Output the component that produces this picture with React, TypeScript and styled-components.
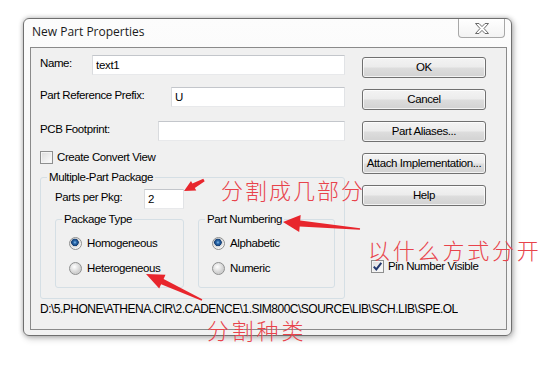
import React from 'react';
import styled, { createGlobalStyle } from 'styled-components';

const uiFont = `'Liberation Sans', Arial, sans-serif`;

const GlobalStyle = createGlobalStyle`
  html, body {
    margin: 0;
    padding: 0;
    background: #ffffff;
  }
  body {
    font-family: ${uiFont};
  }
`;

const Page = styled.div`
  position: relative;
  width: 558px;
  height: 373px;
  padding: 18px 0 0 23px;
  box-sizing: border-box;
  overflow: hidden;
  background: #ffffff;
`;

const Window = styled.div`
  width: 489px;
  height: 318px;
  box-sizing: border-box;
  border: 1px solid #6f6f6f;
  border-radius: 6px;
  background: linear-gradient(#fcfcfc, #f2f2f2);
  box-shadow: 0 0 5px rgba(0, 0, 0, 0.3), 2px 3px 7px rgba(0, 0, 0, 0.18);
  display: flex;
  flex-direction: column;
`;

const TitleBar = styled.div`
  display: flex;
  align-items: flex-start;
  height: 28px;
  padding: 0 6px 0 8px;
  flex-shrink: 0;
`;

const Title = styled.div`
  margin-top: 5px;
  font-family: 'Open Sans', 'Noto Sans', sans-serif;
  font-size: 12px;
  line-height: 16px;
  color: #1a1a1a;
`;

const CloseButton = styled.div`
  margin-left: auto;
  width: 47px;
  height: 19px;
  box-sizing: border-box;
  border: 1px solid #a8a8a8;
  border-top: none;
  border-radius: 0 0 4px 4px;
  background: linear-gradient(#ffffff, #f3f3f3);
  display: flex;
  align-items: center;
  justify-content: center;
`;

const Client = styled.div`
  flex: 1;
  margin: 0 4px 5px 6px;
  border: 1px solid #8a8a8a;
  background: #f0f0f0;
  padding: 7px 20px 0 9px;
  display: flex;
  flex-direction: column;
  font-family: ${uiFont};
  font-size: 11.5px;
  letter-spacing: -0.4px;
  color: #000;
`;

const TopArea = styled.div`
  display: flex;
  gap: 17px;
`;

const LeftCol = styled.div`
  width: 305px;
  display: flex;
  flex-direction: column;
`;

const RightCol = styled.div`
  width: 124px;
  padding-top: 2px;
  display: flex;
  flex-direction: column;
  gap: 11px;
`;

const FieldRow = styled.div<{ $mt?: number; $w?: number }>`
  display: flex;
  justify-content: space-between;
  align-items: flex-start;
  width: ${p => (p.$w ? `${p.$w}px` : '100%')};
  height: 20px;
  margin-top: ${p => p.$mt ?? 0}px;
`;

const Label = styled.span`
  padding-top: 1px;
  line-height: 14px;
  white-space: nowrap;
`;

const TextBox = styled.input<{ $w: number }>`
  width: ${p => p.$w}px;
  height: 20px;
  box-sizing: border-box;
  margin: 0;
  padding: 0 3px;
  border: 1px solid;
  border-color: #c3c6cb #e1e3e6 #e8e9eb #d9dbde;
  background: #ffffff;
  font-family: ${uiFont};
  font-size: 11.5px;
  letter-spacing: -0.3px;
  color: #000;
  outline: none;
`;

const CheckRow = styled.label<{ $mt?: number; $ml?: number }>`
  display: flex;
  align-items: center;
  gap: 4px;
  height: 14px;
  margin-top: ${p => p.$mt ?? 0}px;
  margin-left: ${p => p.$ml ?? 0}px;
  line-height: 14px;
  white-space: nowrap;
`;

const CheckBox = styled.span`
  width: 13px;
  height: 13px;
  box-sizing: border-box;
  border: 1px solid #8e8f8f;
  background: linear-gradient(135deg, #dcdcdc, #fdfdfd);
  box-shadow: inset 0 0 0 1px #f4f4f4;
  display: flex;
  align-items: center;
  justify-content: center;
  flex-shrink: 0;
`;

const RadioDot = styled.span<{ $checked?: boolean }>`
  width: 13px;
  height: 13px;
  box-sizing: border-box;
  border-radius: 50%;
  border: 1px solid #8e8f8f;
  flex-shrink: 0;
  background: ${p =>
    p.$checked
      ? 'radial-gradient(circle at 45% 40%, #8fc0ea 0, #2b6cb0 1.5px, #153e73 3.5px, #d4d4d4 4px, #f6f6f6 6px)'
      : 'radial-gradient(circle at 40% 35%, #ffffff 0, #e8e8e8 3px, #d0d0d0 6px)'};
`;

const GroupBox = styled.fieldset<{ $w: number; $h?: number; $mt?: number }>`
  margin: ${p => p.$mt ?? 0}px 0 0 0;
  padding: 0;
  min-width: 0;
  width: ${p => p.$w}px;
  ${p => (p.$h ? `height: ${p.$h}px;` : '')}
  box-sizing: border-box;
  border: 1px solid #d5dfe5;
  border-radius: 3px;
`;

const Legend = styled.legend`
  margin-left: 6px;
  padding: 0 2px;
  line-height: 14px;
`;

const MultiBody = styled.div`
  padding: 5px 9px 10px 14px;
`;

const InnerGroups = styled.div`
  display: flex;
  gap: 14px;
  margin-top: 3px;
`;

const RadioList = styled.div`
  display: flex;
  flex-direction: column;
  gap: 11px;
  padding: 10px 0 0 13px;
`;

const RadioRow = styled.label`
  display: flex;
  align-items: center;
  gap: 5px;
  height: 14px;
  line-height: 14px;
  white-space: nowrap;
`;

const PushButton = styled.button`
  width: 100%;
  height: 21px;
  box-sizing: border-box;
  margin: 0;
  padding: 0;
  border: 1px solid #707070;
  border-radius: 3px;
  background: linear-gradient(#f3f3f3 0%, #ececec 48%, #dddddd 52%, #d2d2d2 100%);
  box-shadow: inset 0 0 0 1px rgba(255, 255, 255, 0.7);
  font-family: ${uiFont};
  font-size: 11.5px;
  letter-spacing: -0.4px;
  line-height: 19px;
  color: #000;
  white-space: nowrap;
`;

const PathText = styled.div`
  margin-top: 3px;
  width: 418px;
  overflow: hidden;
  white-space: nowrap;
  font-size: 12px;
  letter-spacing: -0.5px;
  line-height: 14px;
`;

const Overlay = styled.svg`
  position: absolute;
  left: 0;
  top: 0;
  pointer-events: none;
`;

const Note = styled.span<{ $x: number; $y: number; $ls: number }>`
  position: absolute;
  left: ${p => p.$x}px;
  top: ${p => p.$y}px;
  font-family: 'Noto Sans CJK SC', 'Noto Sans', sans-serif;
  font-size: 22px;
  font-weight: 300;
  line-height: 22px;
  letter-spacing: ${p => p.$ls}px;
  color: #e8434b;
  white-space: nowrap;
`;

type Pt = [number, number];

function arrow(tail: Pt, tip: Pt, headLen: number, headHalf: number, neck: number, tailHalf: number) {
  const dx = tip[0] - tail[0];
  const dy = tip[1] - tail[1];
  const len = Math.hypot(dx, dy);
  const ux = dx / len;
  const uy = dy / len;
  const nx = -uy;
  const ny = ux;
  const bx = tip[0] - ux * headLen;
  const by = tip[1] - uy * headLen;
  const pts: Pt[] = [
    tip,
    [bx + nx * headHalf, by + ny * headHalf],
    [bx + nx * neck, by + ny * neck],
    [tail[0] + nx * tailHalf, tail[1] + ny * tailHalf],
    [tail[0] - nx * tailHalf, tail[1] - ny * tailHalf],
    [bx - nx * neck, by - ny * neck],
    [bx - nx * headHalf, by - ny * headHalf],
  ];
  return pts.map(p => `${p[0].toFixed(1)},${p[1].toFixed(1)}`).join(' ');
}

const arrows = [
  arrow([204, 180], [184, 191], 11, 5.5, 2.5, 1.5),
  arrow([360, 229], [283, 222], 17, 8.5, 3, 0.7),
  arrow([202, 300], [146, 274], 18, 7.5, 3, 0.8),
];

function Check({ on }: { on?: boolean }) {
  return (
    <CheckBox>
      {on && (
        <svg width="11" height="11" viewBox="0 0 11 11">
          <path d="M1.8 5.6 L4.3 8.4 L9.3 1.8" fill="none" stroke="#23386e" strokeWidth="2" />
        </svg>
      )}
    </CheckBox>
  );
}

function App() {
  return (
    <Page>
      <GlobalStyle />
      <Window>
        <TitleBar>
          <Title>New Part Properties</Title>
          <CloseButton>
            <svg width="14" height="11" viewBox="0 0 14 11">
              <polygon
                points="0.5,0.5 4,0.5 7,3.6 10,0.5 13.5,0.5 9,5.5 13.5,10.5 10,10.5 7,7.4 4,10.5 0.5,10.5 5,5.5"
                fill="#ffffff"
                stroke="#6b6b6b"
                strokeWidth="1"
              />
            </svg>
          </CloseButton>
        </TitleBar>
        <Client>
          <TopArea>
            <LeftCol>
              <FieldRow>
                <Label>Name:</Label>
                <TextBox $w={253} readOnly value="text1" />
              </FieldRow>
              <FieldRow $mt={12}>
                <Label>Part Reference Prefix:</Label>
                <TextBox $w={174} readOnly value="U" />
              </FieldRow>
              <FieldRow $mt={14}>
                <Label>PCB Footprint:</Label>
                <TextBox $w={187} readOnly value="" />
              </FieldRow>
              <CheckRow $mt={9}>
                <Check />
                Create Convert View
              </CheckRow>
              <GroupBox $w={305} $mt={6}>
                <Legend>Multiple-Part Package</Legend>
                <MultiBody>
                  <FieldRow $w={129}>
                    <Label>Parts per Pkg:</Label>
                    <TextBox $w={40} readOnly value="2" />
                  </FieldRow>
                  <InnerGroups>
                    <GroupBox $w={129} $h={76}>
                      <Legend>Package Type</Legend>
                      <RadioList>
                        <RadioRow>
                          <RadioDot $checked />
                          Homogeneous
                        </RadioRow>
                        <RadioRow>
                          <RadioDot />
                          Heterogeneous
                        </RadioRow>
                      </RadioList>
                    </GroupBox>
                    <GroupBox $w={137} $h={76}>
                      <Legend>Part Numbering</Legend>
                      <RadioList>
                        <RadioRow>
                          <RadioDot $checked />
                          Alphabetic
                        </RadioRow>
                        <RadioRow>
                          <RadioDot />
                          Numeric
                        </RadioRow>
                      </RadioList>
                    </GroupBox>
                  </InnerGroups>
                </MultiBody>
              </GroupBox>
            </LeftCol>
            <RightCol>
              <PushButton>OK</PushButton>
              <PushButton>Cancel</PushButton>
              <PushButton>Part Aliases...</PushButton>
              <PushButton>Attach Implementation...</PushButton>
              <PushButton>Help</PushButton>
              <CheckRow $mt={42} $ml={9}>
                <Check on />
                Pin Number Visible
              </CheckRow>
            </RightCol>
          </TopArea>
          <PathText>D:\5.PHONE\ATHENA.CIR\2.CADENCE\1.SIM800C\SOURCE\LIB\SCH.LIB\SPE.OLB</PathText>
        </Client>
      </Window>
      <Overlay width="558" height="373" viewBox="0 0 558 373">
        {arrows.map((pts, i) => (
          <polygon key={i} points={pts} fill="#e8262d" />
        ))}
      </Overlay>
      <Note $x={221} $y={178} $ls={2}>分割成几部分</Note>
      <Note $x={368} $y={238} $ls={2.8}>以什么方式分开</Note>
      <Note $x={207} $y={318} $ls={2.8}>分割种类</Note>
    </Page>
  );
}

export default App;
